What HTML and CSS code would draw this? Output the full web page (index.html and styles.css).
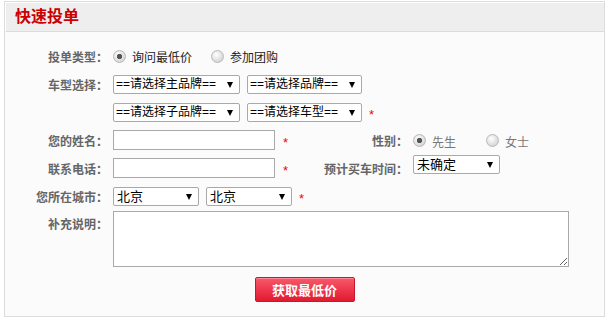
FILE: index.html
```html
<!DOCTYPE html>
<html lang="zh-CN">
<head>
<meta charset="utf-8">
<title>快速投单</title>
<link rel="stylesheet" href="styles.css">
</head>
<body>
<div class="box">
  <div class="hd"><h2>快速投单</h2></div>
  <form class="bd">
    <div class="row">
      <span class="lbl">投单类型：</span>
      <label class="opt"><input type="radio" name="t" checked><span>询问最低价</span></label>
      <label class="opt"><input type="radio" name="t"><span>参加团购</span></label>
    </div>
    <div class="row">
      <span class="lbl">车型选择：</span>
      <span class="sel w127"><select><option>==请选择主品牌==</option></select></span>
      <span class="sel w115"><select><option>==请选择品牌==</option></select></span>
    </div>
    <div class="row">
      <span class="lbl"></span>
      <span class="sel w127"><select><option>==请选择子品牌==</option></select></span>
      <span class="sel w115"><select><option>==请选择车型==</option></select></span>
      <span class="star star-s">*</span>
    </div>
    <div class="row">
      <div class="half">
        <span class="lbl">您的姓名：</span>
        <input type="text" class="txt">
        <span class="star">*</span>
      </div>
      <span class="lbl2">性别：</span>
      <label class="opt opt-g"><input type="radio" name="g" checked><span>先生</span></label>
      <label class="opt opt-g"><input type="radio" name="g"><span>女士</span></label>
    </div>
    <div class="row">
      <div class="half">
        <span class="lbl">联系电话：</span>
        <input type="text" class="txt">
        <span class="star">*</span>
      </div>
      <span class="lbl2">预计买车时间：</span>
      <span class="sel w87 up"><select class="pad3"><option>未确定</option></select></span>
    </div>
    <div class="row">
      <span class="lbl">您所在城市：</span>
      <span class="sel w86"><select class="pad3"><option>北京</option></select></span>
      <span class="sel w86 last"><select class="pad3"><option>北京</option></select></span>
      <span class="star star-s">*</span>
    </div>
    <div class="row ta">
      <span class="lbl lh">补充说明：</span>
      <textarea></textarea>
    </div>
    <button type="button" class="btn">获取最低价</button>
  </form>
</div>
</body>
</html>
```

FILE: styles.css
```css
body {
  margin: 0;
  font: 12px "Liberation Sans", "Noto Sans CJK SC", sans-serif;
  color: #333;
}

.box {
  margin: 1px 0 0 4px;
  width: 599px;
  border: 1px solid #dcdcdc;
  background: #fbfbfb;
}

.hd {
  height: 28px;
  background: #eeeeee;
  border-top: 1px solid #fff;
  border-left: 1px solid #fff;
  border-bottom: 1px solid #dcdcdc;
}

.hd h2 {
  margin: 0;
  padding-left: 9px;
  font-size: 16px;
  line-height: 28px;
  font-weight: bold;
  color: #cc0000;
}

.bd {
  padding: 10px 0 14px;
}

.row {
  display: flex;
  align-items: center;
  height: 28px;
}

.half {
  display: flex;
  align-items: center;
  width: 315px;
  flex: none;
}

.lbl {
  flex: none;
  width: 103px;
  margin-right: 5px;
  text-align: right;
  color: #666;
  font-weight: bold;
}

.lbl2 {
  flex: none;
  width: 88px;
  margin-right: 5px;
  text-align: right;
  color: #666;
  font-weight: bold;
}

.opt {
  display: flex;
  align-items: center;
  gap: 6px;
  margin-right: 19px;
  color: #222;
}

.opt-g {
  color: #777;
  gap: 6px;
  margin-right: 30px;
}

.opt-g span {
  padding-top: 3px;
}

.opt input {
  appearance: none;
  -webkit-appearance: none;
  width: 13px;
  height: 13px;
  margin: 0;
  border-radius: 50%;
  border: 1px solid #b9b9b9;
  background: radial-gradient(circle at 40% 35%, #ffffff 0, #e6e6e6 45%, #c8c8c8 100%);
}

.opt input:checked {
  background:
    radial-gradient(circle, #555 0, #555 2.3px, transparent 3px),
    radial-gradient(circle at 40% 35%, #ffffff 0, #e6e6e6 45%, #c8c8c8 100%);
}

.sel {
  position: relative;
  display: block;
  flex: none;
  margin-right: 7px;
}

.sel::after {
  content: "";
  position: absolute;
  right: 7px;
  top: 7px;
  border-left: 3px solid transparent;
  border-right: 3px solid transparent;
  border-top: 6px solid #000;
  pointer-events: none;
}

.sel select {
  appearance: none;
  -webkit-appearance: none;
  display: block;
  width: 100%;
  height: 19px;
  margin: 0;
  padding: 0 0 0 2px;
  border: 1px solid #a9a9a9;
  border-radius: 2px;
  background: #fff;
  color: #000;
  font: 12px "Liberation Sans", "Noto Sans CJK SC", sans-serif;
}

.sel select.pad3 {
  padding-left: 3px;
  font-size: 13px;
}

.w127 { width: 127px; }
.w115 { width: 115px; }
.w87 { width: 87px; }
.w86 { width: 86px; }

.sel.last { margin-right: 0; }

.up {
  margin-bottom: 8px;
}

.txt {
  box-sizing: border-box;
  width: 162px;
  height: 20px;
  margin: 0;
  padding: 0 3px;
  border: 1px solid #a9a9a9;
  background: #fff;
}

.star {
  color: #f00;
  margin-left: 8px;
  padding-top: 4px;
  font-size: 13px;
}

.star-s {
  margin-left: 0;
}

.sel.last + .star-s {
  margin-left: 7px;
}

.row.ta {
  height: auto;
  align-items: flex-start;
  padding-top: 1px;
}

.lh {
  line-height: 28px;
}

.ta textarea {
  display: block;
  box-sizing: border-box;
  width: 456px;
  height: 56px;
  margin: 0;
  border: 1px solid #a9a9a9;
  background: #fff;
}

.btn {
  display: block;
  margin: 10px auto 0;
  width: 100px;
  height: 25px;
  padding: 0;
  border: 1px solid #c7172f;
  border-radius: 2px;
  background: linear-gradient(#f6596b 0, #ef3b50 45%, #e21a31 100%);
  box-shadow: inset 0 1px 0 #ff8a97;
  color: #fff;
  font: bold 13px "Liberation Sans", "Noto Sans CJK SC", sans-serif;
}
```
